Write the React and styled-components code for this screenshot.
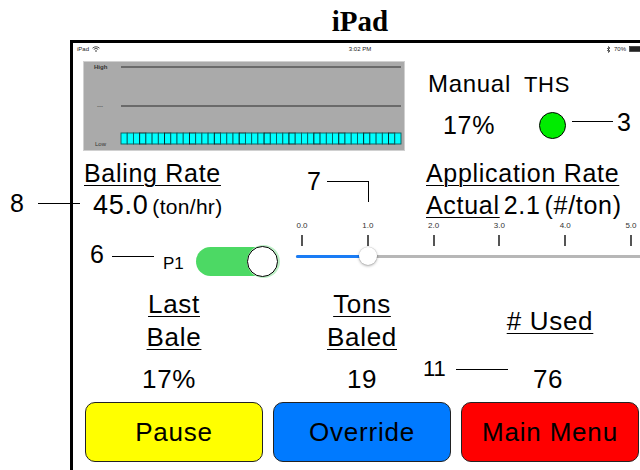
import React from "react";
import styled, { createGlobalStyle } from "styled-components";

const GlobalStyle = createGlobalStyle`
  html, body { margin: 0; padding: 0; background: #fff; }
  body { font-family: "Liberation Sans", Arial, sans-serif; color: #000; }
  #root { width: 640px; height: 470px; }
`;

const Page = styled.div`
  position: relative;
  width: 640px;
  height: 470px;
  overflow: hidden;
  display: flex;
  flex-direction: column;
`;

const Title = styled.h1`
  margin: 0 0 0 70px;
  width: 580px;
  height: 40px;
  font-family: "Liberation Serif", "Times New Roman", serif;
  font-weight: bold;
  font-size: 29px;
  line-height: 42px;
  text-align: center;
`;

const Device = styled.div`
  margin-left: 70px;
  width: 580px;
  flex: 1;
  border: 3px solid #000;
  border-bottom: none;
  box-sizing: border-box;
  display: flex;
  flex-direction: column;
`;

const StatusBar = styled.div`
  height: 12px;
  display: flex;
  align-items: center;
  justify-content: space-between;
  padding: 0 4px;
  font-size: 6px;
  color: #222;
`;

const StatusGroup = styled.div`
  display: flex;
  align-items: center;
  gap: 3px;
  width: ${(p) => p.$w || "auto"};
  justify-content: ${(p) => p.$justify || "flex-start"};
`;

const Screen = styled.div`
  padding: 7px 0 0 11px;
  display: flex;
  flex-direction: column;
`;

const TopSection = styled.div`
  display: flex;
  align-items: flex-start;
`;

const ChartBox = styled.div`
  width: 320px;
  height: 88px;
  box-shadow: 0 0 0 1px #d0d0d0;
`;

const ModePanel = styled.div`
  margin-left: 24px;
  padding-top: 8px;
  display: flex;
  flex-direction: column;
  gap: 12px;
`;

const ModeRow = styled.div`
  display: flex;
  align-items: ${(p) => p.$align || "baseline"};
  gap: ${(p) => p.$gap || 14}px;
  padding-left: ${(p) => p.$indent || 0}px;
`;

const BigText = styled.span`
  font-size: ${(p) => p.$size || 24}px;
  line-height: ${(p) => p.$lh || 28}px;
  letter-spacing: ${(p) => (p.$ls === undefined ? 0.7 : p.$ls)}px;
  text-decoration: ${(p) => (p.$u ? "underline" : "none")};
  text-underline-offset: 3px;
  text-decoration-thickness: 1px;
`;

const Lamp = styled.div`
  width: 25px;
  height: 25px;
  border-radius: 50%;
  background: #00ec00;
  border: 1.5px solid #000;
`;

const MidSection = styled.div`
  margin-top: 7px;
  display: grid;
  grid-template-columns: 212px 1fr;
`;

const Column = styled.div`
  display: flex;
  flex-direction: column;
`;

const Line = styled.div`
  display: flex;
  align-items: baseline;
  gap: ${(p) => p.$gap || 4}px;
  height: 32px;
  padding-left: ${(p) => p.$indent || 0}px;
`;

const SwitchRow = styled.div`
  margin-top: 26px;
  padding-left: 79px;
  display: flex;
  align-items: center;
  gap: 12px;
`;

const SwitchLabel = styled.span`
  font-size: 17px;
  margin-top: 5px;
`;

const SwitchTrack = styled.div`
  position: relative;
  width: 80px;
  height: 29px;
  border-radius: 15px;
  background: #4cd964;
`;

const SwitchKnob = styled.div`
  position: absolute;
  right: -2px;
  top: -1px;
  box-sizing: border-box;
  width: 31px;
  height: 31px;
  border-radius: 50%;
  background: #fff;
  border: 1.5px solid #000;
  box-shadow: 1px 0 0 1px #bdf0c6;
`;

const SliderBox = styled.div`
  display: flex;
  flex-direction: column;
`;

const TickRow = styled.div`
  margin-left: -4px;
  width: 349px;
  display: flex;
  justify-content: space-between;
`;

const Tick = styled.div`
  width: 20px;
  display: flex;
  flex-direction: column;
  align-items: center;
  font-size: 8px;
  line-height: 10px;
  color: #333;
`;

const TickMark = styled.div`
  margin-top: 4px;
  width: 2px;
  height: 11px;
  background: #555;
`;

const Track = styled.div`
  position: relative;
  margin-top: 1px;
  height: 18px;
  display: flex;
  align-items: center;
`;

const Rail = styled.div`
  flex: 1;
  height: 3px;
  border-radius: 2px;
  background: #b7b7b7;
`;

const RailFill = styled.div`
  position: absolute;
  left: 0;
  top: 7.5px;
  height: 3px;
  border-radius: 2px;
  background: #1a7cf5;
`;

const Thumb = styled.div`
  position: absolute;
  top: 0;
  width: 18px;
  height: 18px;
  margin-left: -9px;
  border-radius: 50%;
  background: #fff;
  box-shadow: 0 1px 3px rgba(0, 0, 0, 0.35), 0 0 0 0.5px rgba(0, 0, 0, 0.1);
`;

const Grid3 = styled.div`
  display: grid;
  grid-template-columns: repeat(3, 178px);
  column-gap: 10px;
  margin-left: 1px;
  margin-top: ${(p) => p.$mt || 0}px;
`;

const StatHead = styled.div`
  height: 66px;
  display: flex;
  flex-direction: column;
  align-items: center;
  justify-content: center;
`;

const StatValue = styled.div`
  text-align: center;
  font-size: 26px;
  line-height: 30px;
  letter-spacing: 0.6px;
  padding-right: ${(p) => p.$shift || 0}px;
`;

const ActionButton = styled.button`
  height: 60px;
  border: 1.5px solid #222;
  border-radius: 10px;
  background: ${(p) => p.$bg};
  font-family: "Liberation Sans", Arial, sans-serif;
  font-size: 26px;
  letter-spacing: 0.8px;
  color: #000;
  padding: 0;
`;

const CalloutNum = styled.div`
  position: absolute;
  left: ${(p) => p.$x}px;
  top: ${(p) => p.$y}px;
  font-size: ${(p) => p.$size || 25}px;
  line-height: 24px;
`;

const Leader = styled.div`
  position: absolute;
  left: ${(p) => p.$x}px;
  top: ${(p) => p.$y}px;
  width: ${(p) => p.$w}px;
  height: ${(p) => p.$h || 0}px;
  border-top: 1.5px solid #000;
  border-right: ${(p) => (p.$elbow ? "1.5px solid #000" : "none")};
`;

function Chart() {
  const bars = Array.from({ length: 45 }, (_, i) => i);
  const bw = 280 / 45;
  return (
    <ChartBox>
      <svg width="320" height="88" viewBox="0 0 320 88">
        <rect x="0" y="0" width="320" height="88" fill="#aaaaaa" />
        <text x="10" y="7" fontSize="6" fontWeight="bold" fill="#333" fontFamily="Liberation Sans, Arial, sans-serif">High</text>
        <text x="13" y="46" fontSize="6" fill="#333" fontFamily="Liberation Sans, Arial, sans-serif">---</text>
        <text x="11" y="84" fontSize="6" fill="#333" fontFamily="Liberation Sans, Arial, sans-serif">Low</text>
        <line x1="37" y1="5" x2="317" y2="5" stroke="#555" strokeWidth="1.5" />
        <line x1="37" y1="44" x2="317" y2="44" stroke="#555" strokeWidth="1.5" />
        {bars.map((i) => (
          <rect
            key={i}
            x={37 + i * bw}
            y="71"
            width={bw}
            height="11"
            fill="#00ffff"
            stroke={i % 4 === 3 ? "#062020" : "#0a5a5a"}
            strokeWidth="0.9"
          />
        ))}
      </svg>
    </ChartBox>
  );
}

function Slider({ value, max }) {
  const ticks = [0, 1, 2, 3, 4, 5];
  const pos = 6 + (value / max) * 329;
  return (
    <SliderBox>
      <TickRow>
        {ticks.map((t) => (
          <Tick key={t}>
            <span>{t.toFixed(1)}</span>
            <TickMark />
          </Tick>
        ))}
      </TickRow>
      <Track>
        <Rail />
        <RailFill style={{ width: pos }} />
        <Thumb style={{ left: pos }} />
      </Track>
    </SliderBox>
  );
}

function Wifi() {
  return (
    <svg width="8" height="6" viewBox="0 0 8 6">
      <path d="M0.5 2.2 A5 5 0 0 1 7.5 2.2" stroke="#222" strokeWidth="0.8" fill="none" />
      <path d="M1.8 3.4 A3.2 3.2 0 0 1 6.2 3.4" stroke="#222" strokeWidth="0.8" fill="none" />
      <circle cx="4" cy="5" r="0.8" fill="#222" />
    </svg>
  );
}

function Bluetooth() {
  return (
    <svg width="5" height="7" viewBox="0 0 5 7">
      <path d="M1 2 L4 5 L2.5 6.5 L2.5 0.5 L4 2 L1 5" stroke="#222" strokeWidth="0.7" fill="none" />
    </svg>
  );
}

function Battery() {
  return (
    <svg width="14" height="6" viewBox="0 0 14 6">
      <rect x="0.5" y="0.5" width="12" height="5" fill="#222" stroke="#222" strokeWidth="0.6" />
      <rect x="12.6" y="2" width="1.2" height="2" fill="#222" />
    </svg>
  );
}

export default function App() {
  return (
    <>
      <GlobalStyle />
      <Page>
        <Title>iPad</Title>
        <Device>
          <StatusBar>
            <StatusGroup $w="60px">
              <span>iPad</span>
              <Wifi />
            </StatusGroup>
            <StatusGroup>
              <span>3:02 PM</span>
            </StatusGroup>
            <StatusGroup $w="60px" $justify="flex-end">
              <Bluetooth />
              <span>70%</span>
              <Battery />
            </StatusGroup>
          </StatusBar>
          <Screen>
            <TopSection>
              <Chart />
              <ModePanel>
                <ModeRow $gap={13}>
                  <BigText $size={24}>Manual</BigText>
                  <BigText $size={22}>THS</BigText>
                </ModeRow>
                <ModeRow $align="center" $gap={44} $indent={15}>
                  <BigText $size={25}>17%</BigText>
                  <Lamp />
                </ModeRow>
              </ModePanel>
            </TopSection>

            <MidSection>
              <Column>
                <Line>
                  <BigText $size={25} $lh={32} $u>Baling Rate</BigText>
                </Line>
                <Line $indent={9}>
                  <BigText $size={27} $lh={32}>45.0</BigText>
                  <BigText $size={21} $lh={32} $ls={0.3}>(ton/hr)</BigText>
                </Line>
                <SwitchRow>
                  <SwitchLabel>P1</SwitchLabel>
                  <SwitchTrack>
                    <SwitchKnob />
                  </SwitchTrack>
                </SwitchRow>
              </Column>
              <Column>
                <Line $indent={130}>
                  <BigText $size={25} $lh={32} $u>Application Rate</BigText>
                </Line>
                <Line $indent={130} $gap={4}>
                  <BigText $size={25} $lh={32} $u>Actual</BigText>
                  <BigText $size={25} $lh={32}>2.1</BigText>
                  <BigText $size={25} $lh={32}>(#/ton)</BigText>
                </Line>
                <Slider value={1} max={5} />
              </Column>
            </MidSection>

            <Grid3 $mt={12}>
              <StatHead>
                <BigText $size={26} $lh={33} $u>Last</BigText>
                <BigText $size={26} $lh={33} $u>Bale</BigText>
              </StatHead>
              <StatHead>
                <BigText $size={26} $lh={33} $u>Tons</BigText>
                <BigText $size={26} $lh={33} $u>Baled</BigText>
              </StatHead>
              <StatHead>
                <BigText $size={26} $lh={33} $u># Used</BigText>
              </StatHead>
            </Grid3>
            <Grid3 $mt={10}>
              <StatValue $shift={10}>17%</StatValue>
              <StatValue>19</StatValue>
              <StatValue $shift={4}>76</StatValue>
            </Grid3>
            <Grid3 $mt={8}>
              <ActionButton $bg="#ffff00">Pause</ActionButton>
              <ActionButton $bg="#007aff">Override</ActionButton>
              <ActionButton $bg="#ff0000">Main Menu</ActionButton>
            </Grid3>
          </Screen>
        </Device>

        <Leader $x={572} $y={121} $w={41} />
        <CalloutNum $x={617} $y={110}>3</CalloutNum>

        <CalloutNum $x={10} $y={191}>8</CalloutNum>
        <Leader $x={38} $y={203} $w={42} />

        <CalloutNum $x={90} $y={242}>6</CalloutNum>
        <Leader $x={112} $y={256} $w={42} />

        <CalloutNum $x={307} $y={169}>7</CalloutNum>
        <Leader $x={327} $y={181} $w={41} $h={20} $elbow />

        <CalloutNum $x={423} $y={357} $size={22}>11</CalloutNum>
        <Leader $x={456} $y={369} $w={52} />
      </Page>
    </>
  );
}
